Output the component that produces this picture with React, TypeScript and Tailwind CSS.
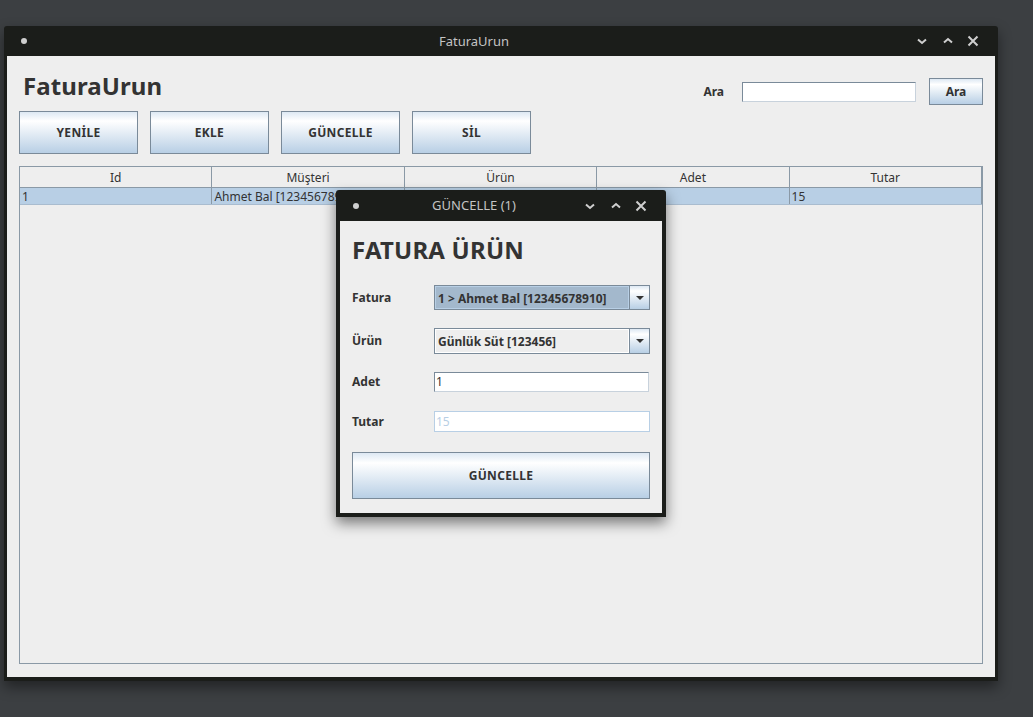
import React from 'react';

const btnGrad =
  'bg-[linear-gradient(180deg,#dde8f3_0%,#ffffff_22%,#b8cfe5_100%)] border border-[#7a8a99]';

function ChevronDown() {
  return (
    <svg width="14" height="10" viewBox="0 0 14 10" fill="none">
      <path d="M3 3.5 L7 7 L11 3.5" stroke="#cfcfcf" strokeWidth="2" />
    </svg>
  );
}

function ChevronUp() {
  return (
    <svg width="14" height="10" viewBox="0 0 14 10" fill="none">
      <path d="M3 6.5 L7 3 L11 6.5" stroke="#cfcfcf" strokeWidth="2" />
    </svg>
  );
}

function CloseX() {
  return (
    <svg width="12" height="12" viewBox="0 0 12 12" fill="none">
      <path d="M1.5 1.5 L10.5 10.5 M10.5 1.5 L1.5 10.5" stroke="#cfcfcf" strokeWidth="2" />
    </svg>
  );
}

function TitleBar({ title, height }: { title: string; height: string }) {
  return (
    <div className={`flex items-center shrink-0 ${height}`}>
      <div className="w-[38px] flex items-center pl-[17px]">
        <div className="w-[6px] h-[6px] rounded-full bg-[#cfcfcf]" />
      </div>
      <div className="flex-1 text-center text-[13px] text-[#c4c4c4] leading-none">{title}</div>
      <div className="w-[92px] flex items-center gap-[12px] pl-[9px]">
        <ChevronDown />
        <ChevronUp />
        <CloseX />
      </div>
    </div>
  );
}

function ArrowBtn() {
  return (
    <div className="w-[20px] h-full flex items-center justify-center border-l border-[#7a8a99] bg-[linear-gradient(180deg,#dde8f3_0%,#ffffff_22%,#b8cfe5_100%)]">
      <svg width="10" height="6" viewBox="0 0 10 6">
        <path d="M1 1 L9 1 L5 5 Z" fill="#333333" />
      </svg>
    </div>
  );
}

const columns = ['Id', 'Müşteri', 'Ürün', 'Adet', 'Tutar'];
// the Ürün and Adet cells sit under the dialog
const row = ['1', 'Ahmet Bal [12345678910]', '', '', '15'];

export default function App() {
  return (
    <div className="w-[1033px] h-[717px] bg-[#3c3f42] overflow-hidden relative font-['Noto_Sans',sans-serif] text-[#333333]">
      {/* main window */}
      <div className="ml-[4px] mt-[26px] w-[994px] h-[655px] bg-[#1b1d1a] flex flex-col rounded-t-[3px] shadow-[0_6px_14px_rgba(0,0,0,0.45)]">
        <TitleBar title="FaturaUrun" height="h-[30px]" />
        <div className="flex-1 mx-[3px] mb-[4px] bg-[#eeeeee] flex flex-col px-[12px] pt-[14px] pb-[13px]">
          <div className="flex items-start justify-between h-[41px]">
            <div className="ml-[4px] h-[32px] leading-[32px] text-[24px] font-bold tracking-[0.1px]">FaturaUrun</div>
            <div className="flex items-center mt-[8px] -mr-[0px]">
              <span className="text-[12px] font-bold">Ara</span>
              <div className="ml-[18px] w-[174px] h-[20px] bg-white border border-[#7a8a99] border-r-[#c8d2dc] border-b-[#c8d2dc]" />
              <button className={`ml-[13px] w-[54px] h-[27px] text-[12px] font-bold ${btnGrad}`}>Ara</button>
            </div>
          </div>
          <div className="flex gap-[12px]">
            {['YENİLE', 'EKLE', 'GÜNCELLE', 'SİL'].map((t) => (
              <button key={t} className={`w-[119px] h-[43px] text-[12px] font-bold tracking-[0.3px] ${btnGrad}`}>
                {t}
              </button>
            ))}
          </div>
          <div className="mt-[12px] flex-1 border border-[#8a99a6] flex flex-col">
            <div className="grid grid-cols-5 h-[21px] border-b border-[#8a99a6]">
              {columns.map((c) => (
                <div key={c} className="text-center text-[12px] leading-[21px] border-r border-[#8a99a6]">
                  {c}
                </div>
              ))}
            </div>
            <div className="grid grid-cols-5 h-[17px] bg-[#b8cfe5] border-b border-[#a9bccf]">
              {row.map((c, i) => (
                <div key={i} className="pl-[2px] text-[12px] leading-[17px] border-r border-[#8a99a6] whitespace-nowrap overflow-hidden">
                  {c}
                </div>
              ))}
            </div>
          </div>
        </div>
      </div>

      {/* dialog */}
      <div className="absolute left-[336px] top-[190px] w-[330px] h-[327px] bg-[#1b1d1a] flex flex-col rounded-t-[3px] shadow-[0_6px_14px_rgba(0,0,0,0.5)]">
        <TitleBar title="GÜNCELLE (1)" height="h-[31px]" />
        <div className="flex-1 mx-[4px] mb-[4px] bg-[#eeeeee] px-[12px] pt-[13px] flex flex-col">
          <div className="h-[32px] leading-[32px] text-[24px] font-bold tracking-[0.2px]">FATURA ÜRÜN</div>
          <div className="mt-[19px] flex items-center">
            <span className="w-[82px] text-[12px] font-bold">Fatura</span>
            <div className="flex-1 h-[25px] flex border border-[#7a8a99] bg-[#a3b8cc]">
              <div className="flex-1 pl-[2px] text-[12px] font-bold leading-[23px] border border-[#b8cfe5]">1 &gt; Ahmet Bal [12345678910]</div>
              <ArrowBtn />
            </div>
          </div>
          <div className="mt-[18px] flex items-center">
            <span className="w-[82px] text-[12px] font-bold">Ürün</span>
            <div className="flex-1 h-[26px] flex border border-[#7a8a99] bg-[#eeeeee]">
              <div className="flex-1 pl-[2px] text-[12px] font-bold leading-[24px] border border-[#ffffff]">Günlük Süt [123456]</div>
              <ArrowBtn />
            </div>
          </div>
          <div className="mt-[18px] flex items-center">
            <span className="w-[82px] text-[12px] font-bold">Adet</span>
            <div className="w-[215px] h-[20px] bg-white border border-[#7a8a99] border-r-[#c8d2dc] border-b-[#c8d2dc] text-[12px] leading-[18px] pl-[1px]">1</div>
          </div>
          <div className="mt-[19px] flex items-center">
            <span className="w-[82px] text-[12px] font-bold">Tutar</span>
            <div className="flex-1 h-[21px] bg-white border border-[#b8cfe5] text-[12px] leading-[19px] pl-[1px] text-[#b8cfe5]">15</div>
          </div>
          <button className={`mt-[20px] w-full h-[47px] text-[12px] font-bold tracking-[0.3px] ${btnGrad}`}>GÜNCELLE</button>
        </div>
      </div>
    </div>
  );
}
